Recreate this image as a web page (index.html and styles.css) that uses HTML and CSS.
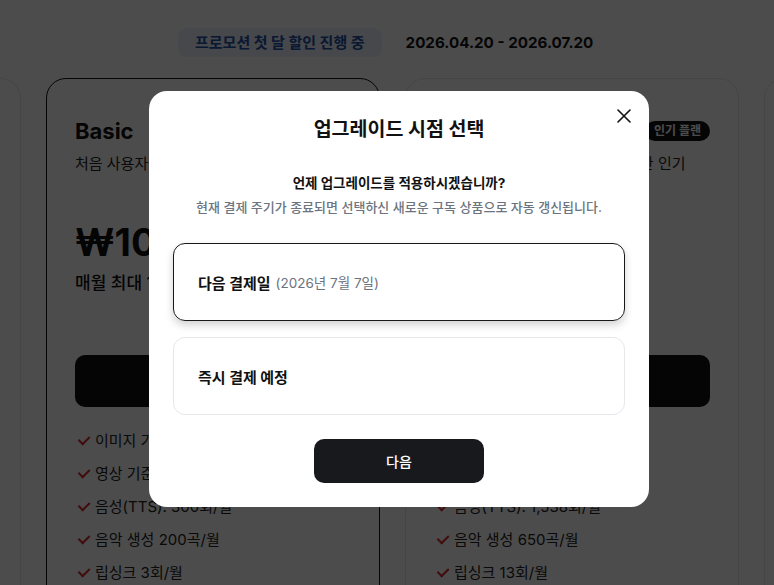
FILE: index.html
```html
<!DOCTYPE html>
<html lang="ko">
<head>
    <meta charset="UTF-8">
    <meta name="viewport" content="width=device-width, initial-scale=1.0">
    <title>요금제 업그레이드</title>
    <link rel="stylesheet" href="styles.css">
</head>
<body>
    <div class="pricing-page">
        <div class="promo-bar">
            <span class="promo-badge">프로모션 첫 달 할인 진행 중</span>
            <span class="promo-period">2026.04.20 - 2026.07.20</span>
        </div>

        <div class="plan-track">
            <div class="plan-card">
                <div class="plan-head"><h2>Free</h2></div>
                <p class="plan-desc">가볍게 체험해 보는 무료 플랜</p>
                <div class="plan-price">₩0</div>
                <p class="plan-credit">매월 최대 100 크레딧 제공</p>
                <button class="plan-btn">현재 플랜</button>
            </div>

            <div class="plan-card selected">
                <div class="plan-head"><h2>Basic</h2></div>
                <p class="plan-desc">처음 사용자를 위한 기본 플랜</p>
                <div class="plan-price">₩10,900</div>
                <p class="plan-credit">매월 최대 1,000 크레딧 제공</p>
                <button class="plan-btn">업그레이드</button>
                <ul class="plan-features">
                    <li>이미지 기준 생성 500장/월</li>
                    <li>영상 기준 생성 20편/월</li>
                    <li>음성(TTS): 300회/월</li>
                    <li>음악 생성 200곡/월</li>
                    <li>립싱크 3회/월</li>
                </ul>
            </div>

            <div class="plan-card">
                <div class="plan-head">
                    <h2>Pro</h2>
                    <span class="plan-badge">인기 플랜</span>
                </div>
                <p class="plan-desc">꾸준히 제작하는 크리에이터를 위한 인기</p>
                <div class="plan-price">₩29,900</div>
                <p class="plan-credit">매월 최대 5,000 크레딧 필</p>
                <button class="plan-btn">업그레이드</button>
                <ul class="plan-features">
                    <li>이미지 기준 생성 2,500장/월</li>
                    <li>영상 기준 생성 100편/월</li>
                    <li>음성(TTS): 1,538회/월</li>
                    <li>음악 생성 650곡/월</li>
                    <li>립싱크 13회/월</li>
                </ul>
            </div>

            <div class="plan-card">
                <div class="plan-head"><h2>Business</h2></div>
                <p class="plan-desc">팀을 위한 플랜</p>
            </div>
        </div>
    </div>

    <div class="modal-backdrop">
        <div class="modal">
            <button class="modal-close" aria-label="닫기">
                <svg width="14" height="14" viewBox="0 0 14 14">
                    <path d="M1 1L13 13M13 1L1 13" stroke="#111" stroke-width="1.6" stroke-linecap="round"/>
                </svg>
            </button>
            <h3 class="modal-title">업그레이드 시점 선택</h3>
            <p class="modal-question">언제 업그레이드를 적용하시겠습니까?</p>
            <p class="modal-hint">현재 결제 주기가 종료되면 선택하신 새로운 구독 상품으로 자동 갱신됩니다.</p>

            <div class="option active">
                <strong>다음 결제일</strong>
                <span class="option-date">(2026년 7월 7일)</span>
            </div>
            <div class="option">
                <strong>즉시 결제 예정</strong>
            </div>

            <div class="modal-actions">
                <button class="next-btn">다음</button>
            </div>
        </div>
    </div>
</body>
</html>
```

FILE: styles.css
```css
* {
    margin: 0;
    padding: 0;
    box-sizing: border-box;
}

body {
    font-family: "Inter", "Noto Sans CJK KR", sans-serif;
    background: #fff;
    color: #111;
    overflow: hidden;
    height: 585px;
}

/* promo header */
.promo-bar {
    display: flex;
    align-items: flex-start;
    gap: 24px;
    padding: 28px 0 0 178px;
    height: 78px;
}

.promo-badge {
    background: #eaf0fa;
    color: #2450a6;
    font-size: 15px;
    font-weight: 700;
    padding: 0 17px;
    height: 29px;
    line-height: 29px;
    border-radius: 9px;
}

.promo-period {
    font-size: 15.2px;
    font-weight: 700;
    color: #111;
    line-height: 29px;
}

/* plan carousel */
.plan-track {
    display: flex;
    gap: 25px;
    transform: translateX(-313px);
}

.plan-card {
    flex: 0 0 334px;
    height: 560px;
    border: 1px solid #e5e7eb;
    border-radius: 20px;
    padding: 38px 28px 0;
}

.plan-card.selected {
    border-color: #111;
}

.plan-head {
    display: flex;
    justify-content: space-between;
    align-items: center;
    height: 28px;
}

.plan-head h2 {
    font-size: 22px;
    font-weight: 700;
}

.plan-badge {
    background: #111;
    color: #fff;
    font-size: 12px;
    font-weight: 700;
    height: 20px;
    line-height: 20px;
    padding: 0 9px;
    border-radius: 10px;
}

.plan-desc {
    margin-top: 8px;
    font-size: 15px;
    line-height: 22px;
    color: #222;
    white-space: nowrap;
}

.plan-price {
    margin-top: 44px;
    font-size: 38px;
    font-weight: 700;
    line-height: 46px;
}

.plan-credit {
    margin-top: 6px;
    font-size: 17px;
    font-weight: 500;
    line-height: 24px;
    white-space: nowrap;
}

.plan-btn {
    display: block;
    width: 100%;
    height: 52px;
    margin-top: 60px;
    border: none;
    border-radius: 10px;
    background: #111;
    color: #fff;
    font-family: inherit;
    font-size: 15px;
    font-weight: 600;
}

.plan-features {
    list-style: none;
    margin-top: 23px;
    padding-left: 5px;
    display: flex;
    flex-direction: column;
    gap: 12px;
}

.plan-features li {
    display: flex;
    align-items: center;
    gap: 4px;
    font-size: 15px;
    line-height: 21px;
    color: #222;
}

.plan-features li::before {
    content: "";
    width: 9px;
    height: 5px;
    border-left: 2px solid #d92a2a;
    border-bottom: 2px solid #d92a2a;
    transform: rotate(-45deg) translateY(-2px);
}

/* upgrade modal */
.modal-backdrop {
    position: fixed;
    inset: 0;
    background: rgba(0, 0, 0, 0.7);
    display: flex;
    justify-content: center;
    align-items: center;
    padding: 13px 0 0 24px;
}

.modal {
    position: relative;
    width: 500px;
    background: #fff;
    border-radius: 18px;
    padding: 24px 24px 24px;
    text-align: center;
}

.modal-close {
    position: absolute;
    top: 17px;
    right: 17px;
    width: 16px;
    height: 16px;
    border: none;
    background: none;
    display: flex;
    align-items: center;
    justify-content: center;
}

.modal-title {
    font-size: 19.5px;
    font-weight: 700;
    line-height: 28px;
    color: #111;
}

.modal-question {
    margin-top: 30px;
    font-size: 13.5px;
    font-weight: 700;
    line-height: 20px;
    color: #111;
}

.modal-hint {
    margin-top: 4px;
    font-size: 13px;
    font-weight: 500;
    line-height: 20px;
    color: #6b7480;
}

.option {
    display: flex;
    align-items: center;
    gap: 5px;
    height: 78px;
    margin-top: 16px;
    padding: 0 24px;
    border: 1px solid #e5e7eb;
    border-radius: 12px;
    text-align: left;
}

.modal-hint + .option {
    margin-top: 26px;
}

.option.active {
    border-color: #18191d;
    box-shadow: 0 4px 8px rgba(0, 0, 0, 0.18);
}

.option strong {
    font-size: 15px;
    font-weight: 700;
    color: #111;
}

.option-date {
    font-size: 13.5px;
    color: #6b7280;
}

.modal-actions {
    margin-top: 24px;
    display: flex;
    justify-content: center;
}

.next-btn {
    width: 170px;
    height: 44px;
    border: none;
    border-radius: 10px;
    background: #18191d;
    color: #fff;
    font-family: inherit;
    font-size: 14px;
    font-weight: 500;
}
```
